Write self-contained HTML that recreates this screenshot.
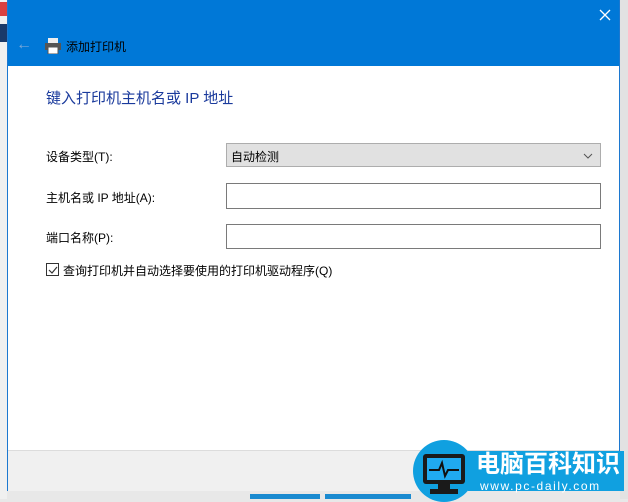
<!DOCTYPE html>
<html><head><meta charset="utf-8"><style>
body{margin:0;width:628px;height:499px;overflow:hidden;background:#e8e8e8;position:relative;font-family:"Liberation Sans","Noto Sans CJK SC",sans-serif;}
.abs{position:absolute}
.win{left:7px;top:0;width:613px;height:491px;background:#fff;border:1px solid #1c78d0;border-top:none;box-sizing:border-box;}
.hdr{left:0;top:0;width:611px;height:66px;background:#0078d7;}
.lbl{font-size:12px;color:#000;}
.box{left:218px;width:375px;box-sizing:border-box;border:1px solid #7a7a7a;background:#fff;}
</style></head><body>
<div class="abs" style="left:0;top:0;width:7px;height:499px;background:#f0f0f0"></div>
<div class="abs" style="left:0;top:2px;width:7px;height:14px;background:#d94040"></div>
<div class="abs" style="left:0;top:24px;width:7px;height:18px;background:#1a3a6a"></div>
<div class="abs" style="left:620px;top:0;width:8px;height:499px;background:#e2e2e2"></div>
<div class="abs" style="left:250px;top:494px;width:70px;height:5px;background:#1a8ad0"></div>
<div class="abs" style="left:325px;top:494px;width:86px;height:5px;background:#1a8ad0"></div>
<div class="abs win">
 <div class="abs hdr">
  <div class="abs" style="left:8px;top:36px;color:#7aa8d8;font-size:16px">&#8592;</div>
  <svg class="abs" style="left:36px;top:38px" width="18" height="16" viewBox="0 0 18 16"><rect x="4" y="0" width="10" height="5" fill="#eee"/><rect x="1" y="5" width="16" height="7" fill="#555"/><rect x="4" y="9" width="10" height="7" fill="#fff" stroke="#555"/></svg>
  <div class="abs" style="left:58px;top:38px;color:#000;font-size:12px">添加打印机</div>
  <svg class="abs" style="left:591px;top:9px" width="12" height="12"><path d="M1 1L11 11M11 1L1 11" stroke="#fff" stroke-width="1.3"/></svg>
 </div>
 <div class="abs" style="left:38px;top:87px;font-size:15px;color:#1a3a9c">键入打印机主机名或 IP 地址</div>
 <div class="abs lbl" style="left:38px;top:148px">设备类型(T):</div>
 <div class="abs lbl" style="left:38px;top:189px">主机名或 IP 地址(A):</div>
 <div class="abs lbl" style="left:38px;top:229px">端口名称(P):</div>
 <div class="abs box" style="top:143px;height:24px;background:#e1e1e1;border-color:#adadad"><span class="abs lbl" style="left:4px;top:4px">自动检测</span><svg class="abs" style="left:356px;top:9px" width="10" height="6"><path d="M1 1L5 5L9 1" stroke="#555" fill="none"/></svg></div>
 <div class="abs box" style="top:183px;height:26px"></div>
 <div class="abs box" style="top:224px;height:25px"></div>
 <div class="abs" style="left:38px;top:263px;width:13px;height:13px;border:1px solid #333;box-sizing:border-box"><svg class="abs" style="left:1px;top:1px" width="10" height="10"><path d="M1 5L4 8L9 2" stroke="#333" fill="none" stroke-width="1.2"/></svg></div>
 <div class="abs lbl" style="left:55px;top:262px">查询打印机并自动选择要使用的打印机驱动程序(Q)</div>
 <div class="abs" style="left:0;top:450px;width:611px;height:40px;background:#f0f0f0;border-top:1px solid #dcdcdc"></div>
</div>
<div class="abs" style="left:413px;top:440px;width:62px;height:62px;border-radius:50%;background:#10a0e0"></div>
<div class="abs" style="left:468px;top:451px;width:156px;height:40px;background:#10a0e0"></div>
<div class="abs" style="left:423px;top:454px;width:42px;height:30px;background:#1a1a1a;border-radius:3px"></div>
<div class="abs" style="left:427px;top:458px;width:34px;height:22px;background:#20aaf0"></div>
<svg class="abs" style="left:427px;top:458px" width="34" height="22"><path d="M2 12H12L15 5L18 18L21 12H32" stroke="#111" stroke-width="2" fill="none"/></svg>
<div class="abs" style="left:438px;top:484px;width:12px;height:5px;background:#1a1a1a"></div>
<div class="abs" style="left:430px;top:489px;width:28px;height:5px;background:#1a1a1a"></div>
<div class="abs" style="left:476px;top:451px;color:#fff;font-size:24px;font-weight:bold;line-height:28px">电脑百科知识</div>
<div class="abs" style="left:480px;top:479px;color:#fff;font-size:12px;letter-spacing:1.6px;line-height:14px">www.pc-daily.com</div>
</body></html>
